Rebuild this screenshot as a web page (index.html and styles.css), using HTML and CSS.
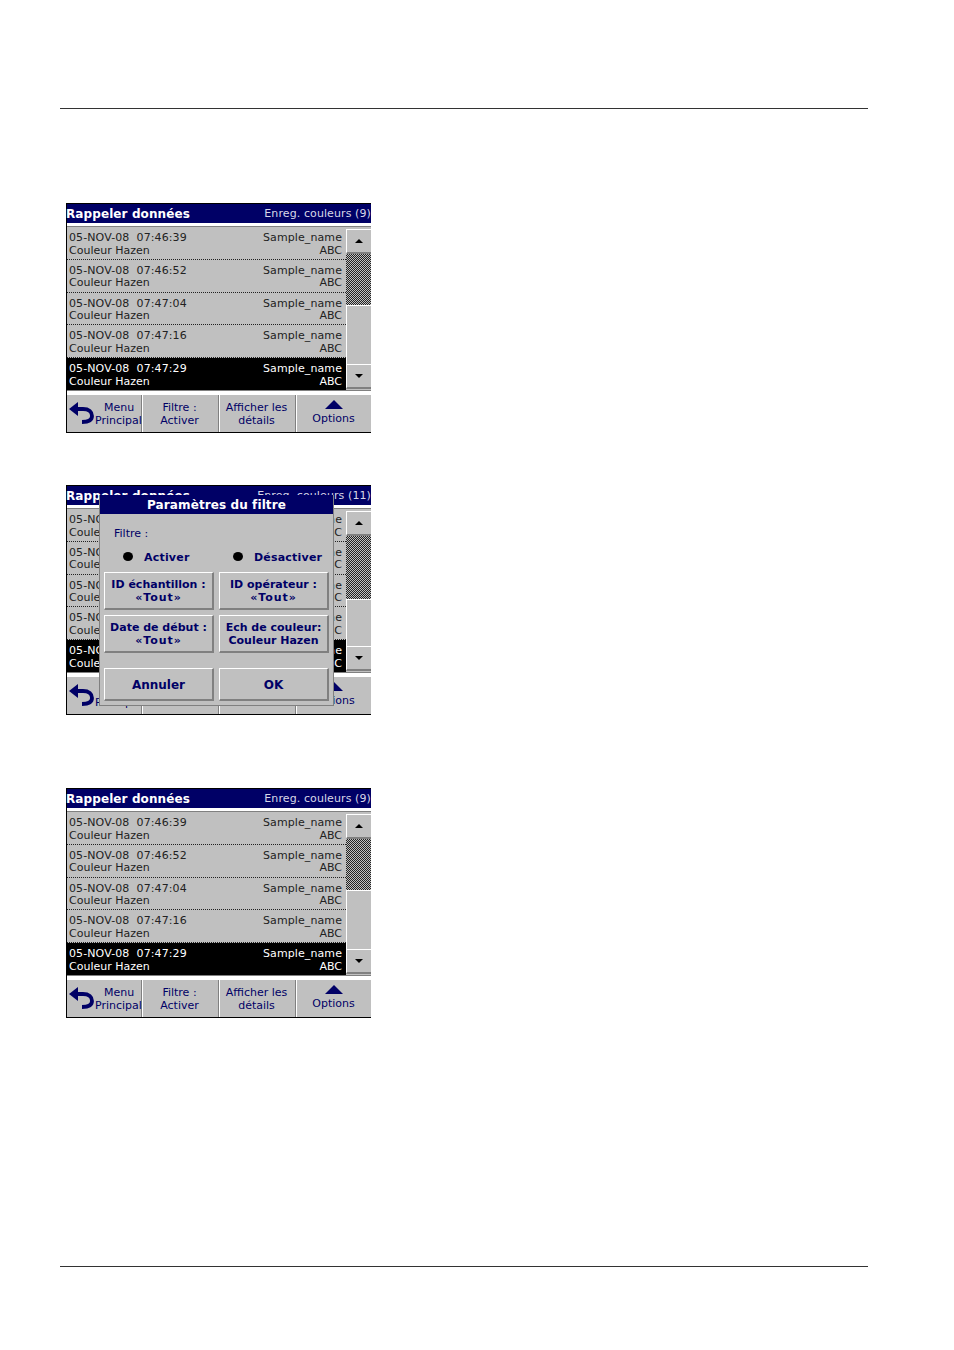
FILE: index.html
```html
<!DOCTYPE html>
<html lang="fr">
<head>
    <meta charset="UTF-8">
    <meta name="viewport" content="width=device-width, initial-scale=1.0">
    <title>Rappeler données</title>
    <link rel="stylesheet" href="styles.css">
</head>
<body>
    <div class="page">
        <hr class="rule">

        <!-- first screen -->
        <div class="screen screen-first">
            <div class="title-bar"><span class="title">Rappeler données</span><span class="count">Enreg. couleurs (9)</span></div>
            <div class="content">
                <div class="list">
                    <div class="row"><div class="line"><span class="stamp">05-NOV-08&nbsp;&nbsp;07:46:39</span><span class="stamp">Sample_name</span></div><div class="line"><span>Couleur Hazen</span><span>ABC</span></div></div>
                    <div class="row"><div class="line"><span class="stamp">05-NOV-08&nbsp;&nbsp;07:46:52</span><span class="stamp">Sample_name</span></div><div class="line"><span>Couleur Hazen</span><span>ABC</span></div></div>
                    <div class="row"><div class="line"><span class="stamp">05-NOV-08&nbsp;&nbsp;07:47:04</span><span class="stamp">Sample_name</span></div><div class="line"><span>Couleur Hazen</span><span>ABC</span></div></div>
                    <div class="row"><div class="line"><span class="stamp">05-NOV-08&nbsp;&nbsp;07:47:16</span><span class="stamp">Sample_name</span></div><div class="line"><span>Couleur Hazen</span><span>ABC</span></div></div>
                    <div class="row selected"><div class="line"><span class="stamp">05-NOV-08&nbsp;&nbsp;07:47:29</span><span class="stamp">Sample_name</span></div><div class="line"><span>Couleur Hazen</span><span>ABC</span></div></div>
                </div>
                <div class="scrollbar">
                    <div class="scroll-btn"><span class="arrow-up"></span></div>
                    <div class="scroll-fill"></div>
                    <div class="scroll-thumb"></div>
                    <div class="scroll-btn"><span class="arrow-down"></span></div>
                </div>
            </div>
            <div class="toolbar">
                <div class="tool tool-back">
                    <svg class="back-icon" viewBox="0 0 25 22" width="25" height="22"><path d="M0 7 L9 0 V14 Z" fill="#000066"/><path d="M8 7 H14 C20 7 23 10 23 14 C23 18 19 20 13 20" fill="none" stroke="#000066" stroke-width="3.8"/></svg>
                    <div class="back-label">Menu<br><span class="back-second">Principal</span></div>
                </div>
                <div class="tool">Filtre :<br>Activer</div>
                <div class="tool">Afficher les<br>détails</div>
                <div class="tool tool-options"><span class="options-arrow"></span>Options</div>
            </div>
        </div>

        <!-- second screen, filter dialog on top -->
        <div class="screen screen-second">
            <div class="title-bar"><span class="title">Rappeler données</span><span class="count">Enreg. couleurs (11)</span></div>
            <div class="content">
                <div class="list">
                    <div class="row"><div class="line"><span class="stamp">05-NOV-08&nbsp;&nbsp;07:46:39</span><span class="stamp">Sample_name</span></div><div class="line"><span>Couleur Hazen</span><span>ABC</span></div></div>
                    <div class="row"><div class="line"><span class="stamp">05-NOV-08&nbsp;&nbsp;07:46:52</span><span class="stamp">Sample_name</span></div><div class="line"><span>Couleur Hazen</span><span>ABC</span></div></div>
                    <div class="row"><div class="line"><span class="stamp">05-NOV-08&nbsp;&nbsp;07:47:04</span><span class="stamp">Sample_name</span></div><div class="line"><span>Couleur Hazen</span><span>ABC</span></div></div>
                    <div class="row"><div class="line"><span class="stamp">05-NOV-08&nbsp;&nbsp;07:47:16</span><span class="stamp">Sample_name</span></div><div class="line"><span>Couleur Hazen</span><span>ABC</span></div></div>
                    <div class="row selected"><div class="line"><span class="stamp">05-NOV-08&nbsp;&nbsp;07:47:29</span><span class="stamp">Sample_name</span></div><div class="line"><span>Couleur Hazen</span><span>ABC</span></div></div>
                </div>
                <div class="scrollbar">
                    <div class="scroll-btn"><span class="arrow-up"></span></div>
                    <div class="scroll-fill scroll-fill-long"></div>
                    <div class="scroll-thumb"></div>
                    <div class="scroll-btn"><span class="arrow-down"></span></div>
                </div>
            </div>
            <div class="toolbar">
                <div class="tool tool-back">
                    <svg class="back-icon" viewBox="0 0 25 22" width="25" height="22"><path d="M0 7 L9 0 V14 Z" fill="#000066"/><path d="M8 7 H14 C20 7 23 10 23 14 C23 18 19 20 13 20" fill="none" stroke="#000066" stroke-width="3.8"/></svg>
                    <div class="back-label">Menu<br><span class="back-second">Principal</span></div>
                </div>
                <div class="tool">Filtre :<br>Activer</div>
                <div class="tool">Afficher les<br>détails</div>
                <div class="tool tool-options"><span class="options-arrow"></span>Options</div>
            </div>

            <div class="dialog">
                <div class="dialog-title">Paramètres du filtre</div>
                <div class="dialog-label">Filtre :</div>
                <div class="radios">
                    <div class="radio"><span class="dot"></span>Activer</div>
                    <div class="radio"><span class="dot"></span>Désactiver</div>
                </div>
                <div class="dialog-grid">
                    <div class="dlg-btn">ID échantillon :<br><span class="any">«Tout»</span></div>
                    <div class="dlg-btn">ID opérateur :<br><span class="any">«Tout»</span></div>
                    <div class="dlg-btn">Date de début :<br><span class="any">«Tout»</span></div>
                    <div class="dlg-btn">Ech de couleur:<br>Couleur Hazen</div>
                </div>
                <div class="dialog-actions">
                    <div class="dlg-btn dlg-action">Annuler</div>
                    <div class="dlg-btn dlg-action">OK</div>
                </div>
            </div>
        </div>

        <!-- third screen -->
        <div class="screen screen-third">
            <div class="title-bar"><span class="title">Rappeler données</span><span class="count">Enreg. couleurs (9)</span></div>
            <div class="content">
                <div class="list">
                    <div class="row"><div class="line"><span class="stamp">05-NOV-08&nbsp;&nbsp;07:46:39</span><span class="stamp">Sample_name</span></div><div class="line"><span>Couleur Hazen</span><span>ABC</span></div></div>
                    <div class="row"><div class="line"><span class="stamp">05-NOV-08&nbsp;&nbsp;07:46:52</span><span class="stamp">Sample_name</span></div><div class="line"><span>Couleur Hazen</span><span>ABC</span></div></div>
                    <div class="row"><div class="line"><span class="stamp">05-NOV-08&nbsp;&nbsp;07:47:04</span><span class="stamp">Sample_name</span></div><div class="line"><span>Couleur Hazen</span><span>ABC</span></div></div>
                    <div class="row"><div class="line"><span class="stamp">05-NOV-08&nbsp;&nbsp;07:47:16</span><span class="stamp">Sample_name</span></div><div class="line"><span>Couleur Hazen</span><span>ABC</span></div></div>
                    <div class="row selected"><div class="line"><span class="stamp">05-NOV-08&nbsp;&nbsp;07:47:29</span><span class="stamp">Sample_name</span></div><div class="line"><span>Couleur Hazen</span><span>ABC</span></div></div>
                </div>
                <div class="scrollbar">
                    <div class="scroll-btn"><span class="arrow-up"></span></div>
                    <div class="scroll-fill"></div>
                    <div class="scroll-thumb"></div>
                    <div class="scroll-btn"><span class="arrow-down"></span></div>
                </div>
            </div>
            <div class="toolbar">
                <div class="tool tool-back">
                    <svg class="back-icon" viewBox="0 0 25 22" width="25" height="22"><path d="M0 7 L9 0 V14 Z" fill="#000066"/><path d="M8 7 H14 C20 7 23 10 23 14 C23 18 19 20 13 20" fill="none" stroke="#000066" stroke-width="3.8"/></svg>
                    <div class="back-label">Menu<br><span class="back-second">Principal</span></div>
                </div>
                <div class="tool">Filtre :<br>Activer</div>
                <div class="tool">Afficher les<br>détails</div>
                <div class="tool tool-options"><span class="options-arrow"></span>Options</div>
            </div>
        </div>

        <hr class="rule rule-bottom">
    </div>
</body>
</html>
```

FILE: styles.css
```css
body {
    margin: 0;
    background-color: white;
    font-family: 'DejaVu Sans', sans-serif;
    font-size: 11px;
}

.page {
    height: 1350px;
    padding-top: 108px;
    box-sizing: border-box;
    overflow: hidden;
}

.rule {
    width: 808px;
    height: 1px;
    margin: 0 0 0 60px;
    border: none;
    background-color: #333;
}

.rule-bottom {
    margin-top: 248px;
}

.screen {
    position: relative;
    width: 305px;
    height: 230px;
    margin-left: 66px;
    box-sizing: border-box;
    border-top: 1px solid black;
    border-left: 1px solid black;
    border-bottom: 1px solid black;
    display: flex;
    flex-direction: column;
    background-color: white;
}

.screen-first {
    margin-top: 94px;
}

.screen-second {
    margin-top: 52px;
}

.screen-third {
    margin-top: 73px;
}

.title-bar {
    height: 19px;
    flex: none;
    background-color: #000066;
    color: white;
    display: flex;
    justify-content: space-between;
    align-items: center;
}

.title {
    font-size: 12px;
    font-weight: bold;
    letter-spacing: 0.1px;
    margin-left: -1px;
}

.count {
    font-size: 11px;
    letter-spacing: 0.1px;
    color: #d8d8e8;
}

.content {
    height: 163px;
    flex: none;
    margin-top: 3px;
    border-top: 1px solid #808080;
    border-bottom: 1px solid #808080;
    display: flex;
    background-color: #c0c0c0;
    box-sizing: content-box;
}

.list {
    width: 279px;
    flex: none;
    display: flex;
    flex-direction: column;
}

.row {
    flex: 1;
    padding: 5px 4px 0 2px;
    box-sizing: border-box;
    border-bottom: 1px dotted #222;
    color: #222;
    line-height: 12.5px;
}

.row.selected {
    background-color: black;
    color: white;
    border-bottom: none;
}

.line {
    display: flex;
    justify-content: space-between;
}

.stamp {
    letter-spacing: 0.1px;
}

.scrollbar {
    flex: 1;
    padding: 2px 0 1px;
    display: flex;
    flex-direction: column;
}

.scroll-btn {
    height: 25px;
    flex: none;
    box-sizing: border-box;
    border-top: 1px solid white;
    border-left: 1px solid white;
    border-bottom: 2px solid #808080;
    display: flex;
    align-items: center;
    justify-content: center;
}

.scroll-fill {
    height: 51px;
    flex: none;
    background: repeating-conic-gradient(#222 0 25%, #c0c0c0 0 50%) 0 0 / 2px 2px;
}

.scroll-fill-long {
    height: 63px;
}

.scroll-thumb {
    flex: 1;
    border-top: 1px solid white;
    border-left: 1px solid white;
}

.arrow-up {
    border-left: 4px solid transparent;
    border-right: 4px solid transparent;
    border-bottom: 4px solid black;
}

.arrow-down {
    border-left: 4px solid transparent;
    border-right: 4px solid transparent;
    border-top: 4px solid black;
}

.toolbar {
    height: 37px;
    flex: none;
    margin-top: 4px;
    display: grid;
    grid-template-columns: 75px 77px 77px 1fr;
    background-color: #c0c0c0;
    color: #000066;
}

.tool {
    border-right: 1px solid #808080;
    border-left: 1px solid white;
    text-align: center;
    line-height: 12.5px;
    padding: 7px 2px 0 0;
    box-sizing: border-box;
}

.tool-back {
    display: flex;
    border-left: none;
    padding: 0;
    text-align: left;
}

.back-icon {
    flex: none;
    margin: 7px 0 0 2px;
}

.back-label {
    padding-top: 7px;
    margin-left: 1px;
    white-space: nowrap;
    text-indent: 9px;
}

.back-second {
    display: inline-block;
    text-indent: 0;
}

.tool-options {
    border-right: none;
    display: flex;
    flex-direction: column;
    align-items: center;
    padding: 5px 1px 0 0;
}

.options-arrow {
    border-left: 9px solid transparent;
    border-right: 9px solid transparent;
    border-bottom: 9px solid #000066;
    margin-bottom: 4px;
}

.dialog {
    position: absolute;
    left: 32px;
    top: 9px;
    width: 235px;
    height: 211px;
    box-sizing: border-box;
    background-color: #c0c0c0;
    border-bottom: 1px solid #808080;
    border-left: 1px solid #808080;
    border-right: 1px solid #808080;
    color: #000066;
    display: flex;
    flex-direction: column;
}

.dialog-title {
    height: 19px;
    flex: none;
    background-color: #000066;
    color: white;
    font-weight: bold;
    font-size: 12px;
    letter-spacing: 0.1px;
    text-align: center;
    line-height: 20px;
}

.dialog-label {
    margin: 14px 0 0 14px;
    line-height: 12px;
}

.radios {
    display: grid;
    grid-template-columns: 110px 1fr;
    margin: 11px 0 0 23px;
    font-weight: bold;
    letter-spacing: 0.2px;
    line-height: 14px;
}

.radio {
    display: flex;
    align-items: center;
}

.dot {
    width: 10px;
    height: 9px;
    margin: -3px 11px 0 0;
    border-radius: 50%;
    background-color: black;
}

.dialog-grid {
    display: grid;
    grid-template-columns: 110px 110px;
    grid-auto-rows: 38px;
    gap: 5px;
    margin: 7px 0 0 4px;
}

.dlg-btn {
    box-sizing: border-box;
    border-top: 1px solid white;
    border-left: 1px solid white;
    border-right: 2px solid #808080;
    border-bottom: 2px solid #808080;
    font-weight: bold;
    text-align: center;
    line-height: 13px;
    padding-top: 5px;
    white-space: nowrap;
}

.any {
    letter-spacing: 0.9px;
}

.dialog-actions {
    display: grid;
    grid-template-columns: 110px 110px;
    gap: 5px;
    margin: 15px 0 0 4px;
}

.dlg-action {
    height: 33px;
    font-size: 12px;
    line-height: 32px;
    padding-top: 0;
}
```
